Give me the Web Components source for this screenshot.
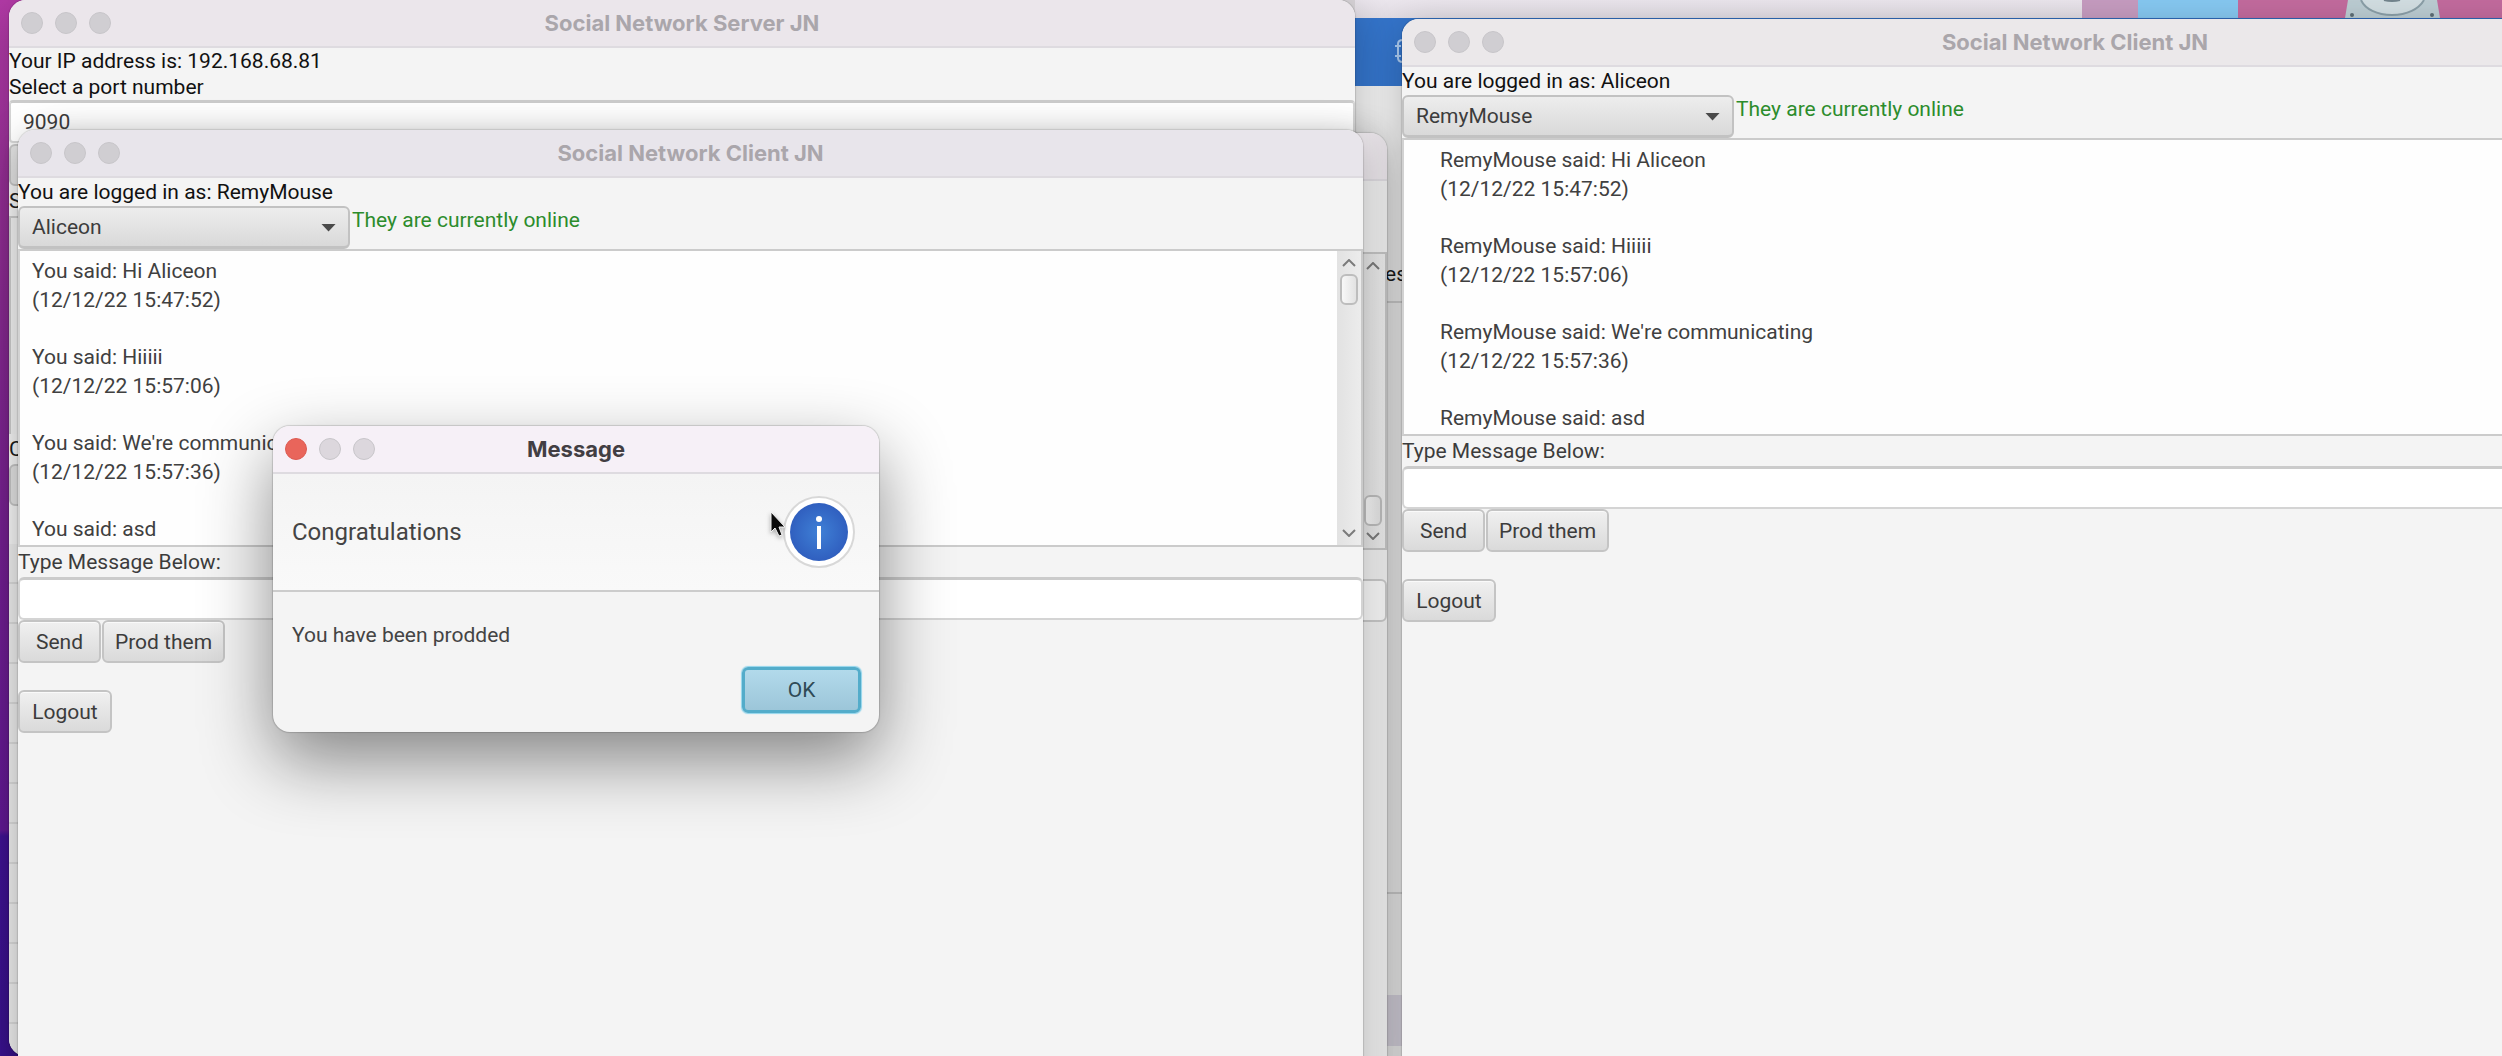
<!DOCTYPE html>
<html lang="en">
<head>
<meta charset="utf-8">
<title>Social Network JN</title>
<style>
html, body { margin: 0; height: 100%; overflow: hidden; }
body { font-family: Roboto, "Liberation Sans", sans-serif; font-size: 21px; color: #1c1c1c; }
</style>
</head>
<body>
<desk-top></desk-top>
<script>
const define = (name, html, setup) => {
  const template = document.createElement('template');
  template.innerHTML = html;
  customElements.define(name, class extends HTMLElement {
    constructor() {
      super();
      this.attachShadow({ mode: 'open' }).append(template.content.cloneNode(true));
    }
    connectedCallback() { if (setup) setup(this, this.shadowRoot); }
  });
};

/* Window frame: title bar with three dots, and a body slot */
define('app-window', `
<style>
  :host { display: flex; flex-direction: column; box-sizing: border-box; overflow: hidden;
    background: #f4f4f4; border-radius: 17px; }
  header { flex: none; box-sizing: border-box; height: 48px; display: grid; grid-template-columns: 1fr auto 1fr;
    align-items: center; background: var(--bar, #ebe6eb); border-bottom: 2px solid #dedbe0; }
  .dots { display: flex; gap: 12px; padding-left: 12px; }
  .dots i { width: 22px; height: 22px; border-radius: 50%; box-sizing: border-box; background: var(--dot, #d0ced2); border: 1px solid #c7c5c9; }
  .dots i:first-child { background: var(--close, #d0ced2); border-color: var(--close-edge, #c7c5c9); }
  h1 { margin: 0; font: 700 22px/26px Inter, sans-serif; color: var(--title, #aaa6ab); }
</style>
<header><div class="dots"><i></i><i></i><i></i></div><h1></h1></header>
<slot></slot>`, (host, root) => {
  root.querySelector('h1').textContent = host.getAttribute('heading') || '';
});

define('fx-button', `
<style>
  :host { display: inline-flex; }
  button { flex: 1; box-sizing: border-box; height: 43px; padding: 0; margin: 0; font: inherit; color: #3c3c3c; white-space: nowrap;
    background: linear-gradient(#f0f0f0, #dadada); border: 2px solid #c4c4c4; border-radius: 6px; box-shadow: inset 0 1px 0 #fafafa; }
  :host([primary]) button { height: 46px; color: #2f4a56; background: linear-gradient(#b2daeb, #9cc6d9);
    border: 3px solid #53acca; box-shadow: 0 0 1px 1px #8fd4ec; }
</style>
<button type="button"><slot></slot></button>`);

define('scroll-bar', `
<style>
  :host { display: flex; flex-direction: column; align-items: center; box-sizing: border-box; width: 24px;
    padding: 8px 0; background: linear-gradient(90deg, #e2e2e2, #ececec); }
  svg { flex: none; width: 14px; height: 8px; fill: none; stroke: #7b7b7b; stroke-width: 2; }
  .track { flex: 1; display: flex; flex-direction: column; padding: 7px 0 6px; }
  .thumb { box-sizing: border-box; width: 18px; height: 31px; border: 2px solid #bdbdbd; border-radius: 6px;
    background: linear-gradient(90deg, #f8f8f8, #e2e2e2); }
  :host([at-end]) .track { justify-content: flex-end; }
</style>
<svg viewBox="0 0 14 8"><path d="M1 7 7 1l6 6"/></svg>
<div class="track"><div class="thumb"></div></div>
<svg viewBox="0 0 14 8"><path d="M1 1l6 6 6-6"/></svg>`);

/* One message of the log: its text and its time */
define('chat-message', `
<style>
  :host { display: block; line-height: 29px; color: #404040; white-space: nowrap; }
  div { height: 29px; }
</style>
<div><slot></slot></div><div><slot name="time"></slot></div>`);

define('chat-client', `
<style>
  :host { display: flex; flex-direction: column; align-items: stretch; }
  .who { line-height: 28px; color: #111; }
  .row { display: flex; }
  .combo { display: grid; width: 332px; }
  select { grid-area: 1 / 1; appearance: none; box-sizing: border-box; width: 100%; height: 43px; margin: 0; padding: 0 12px;
    font: inherit; color: #3c3c3c; background: linear-gradient(#ededed, #d9d9d9);
    border: 2px solid #c2c2c2; border-bottom-width: 3px; border-radius: 6px; }
  .arrow { grid-area: 1 / 1; justify-self: end; align-self: center; margin-right: 14px; width: 15px; height: 8px;
    background: #4a4a4a; clip-path: polygon(0 0, 100% 0, 50% 100%); pointer-events: none; }
  .state { line-height: 29px; padding-left: 2px; color: #2c8c2c; }
  .log { display: flex; justify-content: space-between; box-sizing: border-box; height: 298px; background: #fefefe;
    border: 2px solid #cbcbcb; border-left-color: #d2d2d2; }
  .messages { flex: 1; overflow: hidden; display: flex; flex-direction: column; gap: 28px; padding: 6px 12px; padding-left: var(--indent, 12px); }
  label { line-height: 30px; color: #3c3c3c; }
  input { box-sizing: border-box; width: 100%; height: 43px; margin: 0; padding: 0 12px; font: inherit; color: #3c3c3c;
    background: #fff; border: 2px solid #d4d4d4; border-top: 3px solid #cbcbcb; border-radius: 6px; }
  .buttons { display: flex; gap: 1px; }
  .send { width: 83px; } .prod { width: 123px; } .logout { width: 94px; margin-top: 27px; }
</style>
<div class="who"></div>
<div class="row">
  <div class="combo"><select aria-label="Chat partner"><option></option></select><span class="arrow"></span></div>
  <div class="state">They are currently online</div>
</div>
<div class="log"><div class="messages" role="log"><slot></slot></div><scroll-bar></scroll-bar></div>
<label for="message">Type Message Below:</label>
<input id="message" type="text">
<div class="buttons"><fx-button class="send">Send</fx-button><fx-button class="prod">Prod them</fx-button></div>
<div><fx-button class="logout">Logout</fx-button></div>`, (host, root) => {
  root.querySelector('.who').textContent = 'You are logged in as: ' + host.getAttribute('user');
  root.querySelector('option').textContent = host.getAttribute('partner');
});

/* Older client of which only the right edge shows */
define('idle-client', `
<style>
  :host { display: flex; flex-direction: column; }
  .log { display: flex; justify-content: flex-end; height: 294px; margin-top: 71px; background: #fff; border: 2px solid #c4c4c4; }
  input { box-sizing: border-box; height: 43px; margin: 29px 0 0; border: 2px solid #c9c9c9; border-radius: 6px; background: #f8f8f8; }
</style>
<div class="log"><scroll-bar at-end></scroll-bar></div>
<input type="text" aria-label="Message">`);

define('server-panel', `
<style>
  :host { display: flex; flex-direction: column; flex: 1; }
  .text { line-height: 26px; color: #111; }
  input { box-sizing: border-box; width: 100%; height: 43px; margin: 0 0 1px; padding: 0 12px; font: inherit; color: #3c3c3c;
    background: #fff; border: 2px solid #d4d4d4; border-top: 3px solid #cbcbcb; border-radius: 4px; }
  .block { height: 42px; border: 2px solid #c4c4c4; border-radius: 6px; background: #e2e2e2; box-sizing: border-box; }
  .tag { line-height: 30px; }
  .area { height: 218px; border: 2px solid #cbcbcb; border-bottom: 0; background: #f2f2f2; box-sizing: border-box; }
  .rows { flex: 1; background: repeating-linear-gradient(#ececec 0 38px, #d9d9d9 38px 40px); margin-top: 38px; }
</style>
<div class="text">Your IP address is: 192.168.68.81</div>
<label class="text" for="port">Select a port number</label>
<input id="port" type="text" value="9090">
<div class="block"></div>
<div class="tag">S</div>
<div class="area"></div>
<div class="tag">C</div>
<div class="block"></div>
<div class="rows"></div>`);

define('message-dialog', `
<style>
  :host { display: flex; flex-direction: column; flex: 1; }
  .head { box-sizing: border-box; height: 118px; display: flex; align-items: center; justify-content: space-between; padding: 0 23px 0 19px;
    font-size: 24px; color: #444; background: linear-gradient(#f4f4f4, #f9f9f9); border-bottom: 2px solid #cccccc; }
  svg { display: block; }
  .body { padding: 27px 18px 0 19px; display: flex; flex-direction: column; color: #444; }
  p { margin: 0; line-height: 32px; }
  fx-button { align-self: flex-end; width: 119px; margin-top: 16px; }
</style>
<div class="head"><span>Congratulations</span>
<svg width="74" height="74" viewBox="0 0 74 74" role="img" aria-label="Information">
  <defs><radialGradient id="g"><stop offset="0" stop-color="#3f80d6"/><stop offset="1" stop-color="#305fbf"/></radialGradient></defs>
  <circle cx="37" cy="37" r="35" fill="#fff" stroke="#d8d8d8" stroke-width="2"/>
  <circle cx="37" cy="37" r="29" fill="url(#g)"/>
  <circle cx="37" cy="24" r="3" fill="#fff"/><rect x="35" y="31" width="4" height="23" fill="#fff"/>
</svg></div>
<div class="body"><p>You have been prodded</p><fx-button primary>OK</fx-button></div>`);

/* The desktop: windows are placed freely on it */
define('desk-top', `
<style>
  :host { display: block; position: relative; height: 100vh; overflow: hidden;
    background: linear-gradient(#b23aa6, #8f2d97 300px, #7a2298 540px, #661b9b 830px, #43149a 836px, #3c1393); }
  .back, .strip, app-window, .cursor { position: absolute; }
  .back { left: 1340px; right: 0; top: 0; bottom: 0; display: flex; flex-direction: column; background: #efefef; }
  .top { height: 18px; display: flex; background: #c36b9e; }
  .finder { width: 742px; background: linear-gradient(#ebe6ed, #e2dde4); }
  .mauve { width: 56px; background: #c69cc0; } .sky { width: 100px; background: #86c8f1; }
  .disk { margin-left: 107px; }
  .blue { height: 68px; background: #3474ca; padding-left: 54px; }
  .blue svg, .top svg { display: block; }
  .pane { display: flex; flex-direction: column; }
  .note { box-sizing: border-box; height: 217px; padding: 174px 0 0 45px; line-height: 28px; border-bottom: 2px solid #cfcfcf; }
  .gap { height: 589px; border-bottom: 2px solid #cfcfcf; }
  .low { height: 101px; } .bar { height: 51px; background: #d8d4df; }
  .strip { left: 334px; right: 1147px; top: 0; height: 12px; background: #d8d4d8; }
  app-window { box-shadow: 0 0 1px 1px rgba(0,0,0,.12), 0 10px 40px rgba(0,0,0,.24); }
  .server { left: 9px; right: 1147px; top: 0; bottom: 0; }
  .idle { left: 42px; right: 1115px; top: 133px; bottom: -40px; background: #efefef; --title: transparent; }
  .remy { left: 18px; right: 1139px; top: 130px; bottom: -40px; --bar: #e8e5eb; }
  .alice { left: 1402px; right: -246px; top: 19px; bottom: -40px; --bar: #ebe8ea; --indent: 36px; }
  .dialog { left: 273px; width: 606px; top: 426px; height: 306px; --bar: #f6f0f7; --dot: #dcd7dd; --close: #e9655b; --close-edge: #dc5b52; --title: #423e43;
    box-shadow: 0 0 1px 1px rgba(0,0,0,.15), 0 28px 70px rgba(0,0,0,.46); }
  .cursor { left: 768px; top: 510px; filter: drop-shadow(0 2px 2px rgba(0,0,0,.3)); }
</style>
<div class="back">
  <div class="top"><div class="finder"></div><div class="mauve"></div><div class="sky"></div>
    <svg class="disk" width="95" height="18" viewBox="0 0 95 18"><path d="M3 0h89l3 18H0z" fill="#bccdd3"/><path d="M16 0c4 9 16 15 31 15S74 9 79 0" fill="#d3dfe3" stroke="#8b9fa8" stroke-width="2"/><path d="M39 0q8 2 16 0" fill="none" stroke="#73858e" stroke-width="2"/><circle cx="7" cy="15" r="2" fill="#5d6d75"/><circle cx="87" cy="15" r="2" fill="#5d6d75"/></svg>
  </div>
  <div class="blue"><svg width="20" height="68" viewBox="0 0 20 68" fill="none" stroke="#a9c9ee" stroke-width="2"><path d="M9 22q-5 0-5 4v14q0 4 5 4M1 28h6M1 38h6"/></svg></div>
  <div class="pane"><div class="note">es</div><div class="gap"></div><div class="low"></div><div class="bar"></div></div>
</div>
<div class="strip"></div>
<app-window class="server" heading="Social Network Server JN"><server-panel></server-panel></app-window>
<app-window class="idle"><idle-client></idle-client></app-window>
<app-window class="remy" heading="Social Network Client JN">
  <chat-client user="RemyMouse" partner="Aliceon">
    <chat-message>You said: Hi Aliceon<span slot="time">(12/12/22 15:47:52)</span></chat-message>
    <chat-message>You said: Hiiiii<span slot="time">(12/12/22 15:57:06)</span></chat-message>
    <chat-message>You said: We're communic<span slot="time">(12/12/22 15:57:36)</span></chat-message>
    <chat-message>You said: asd</chat-message>
  </chat-client>
</app-window>
<app-window class="alice" heading="Social Network Client JN">
  <chat-client user="Aliceon" partner="RemyMouse">
    <chat-message>RemyMouse said: Hi Aliceon<span slot="time">(12/12/22 15:47:52)</span></chat-message>
    <chat-message>RemyMouse said: Hiiiii<span slot="time">(12/12/22 15:57:06)</span></chat-message>
    <chat-message>RemyMouse said: We're communicating<span slot="time">(12/12/22 15:57:36)</span></chat-message>
    <chat-message>RemyMouse said: asd</chat-message>
  </chat-client>
</app-window>
<app-window class="dialog" heading="Message"><message-dialog></message-dialog></app-window>
<svg class="cursor" width="22" height="32" viewBox="0 0 22 32"><path d="M3 2v20l4-4 4 8 3-1-3-8h6z" fill="#0b0b0b" stroke="#f4f4f4" stroke-width="1"/></svg>`);
</script>
</body>
</html>
